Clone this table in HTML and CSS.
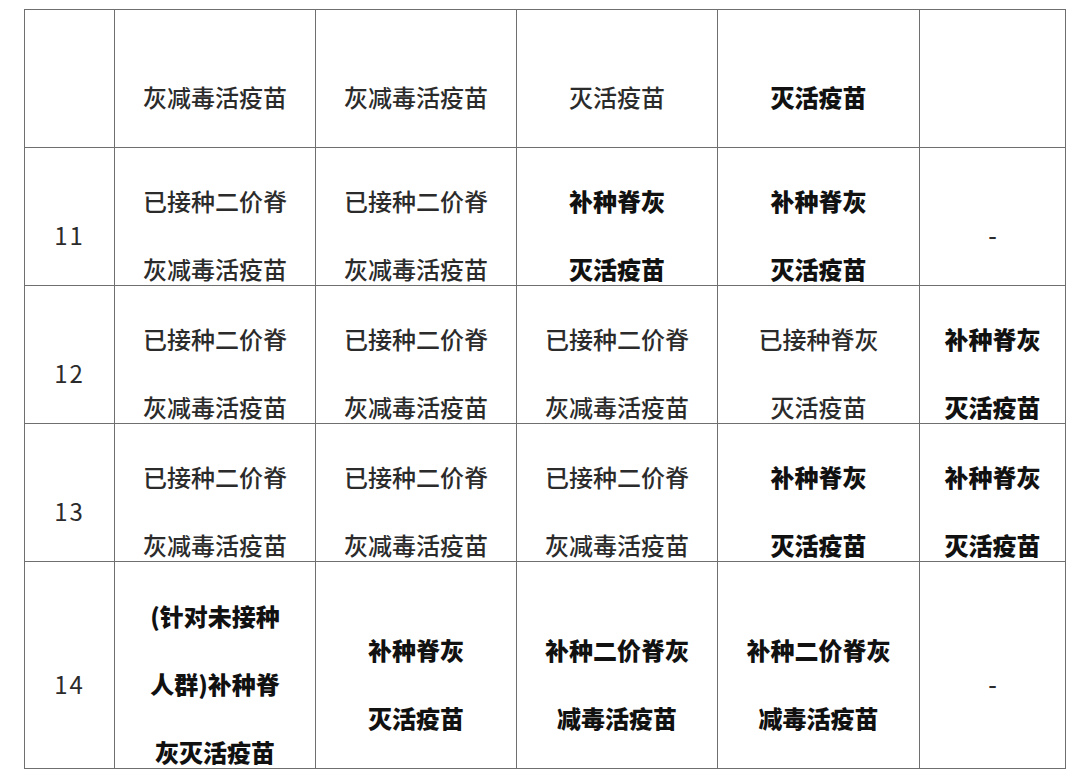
FILE: index.html
```html
<!DOCTYPE html>
<html lang="zh-CN">
<head>
<meta charset="utf-8">
<title>疫苗接种表</title>
<link rel="stylesheet" href="styles.css">
</head>
<body>
<div class="sheet">
  <div class="cell num"></div>
  <div class="cell"><div class="ln">灰减毒活疫苗</div></div>
  <div class="cell"><div class="ln">灰减毒活疫苗</div></div>
  <div class="cell"><div class="ln">灭活疫苗</div></div>
  <div class="cell b"><div class="ln">灭活疫苗</div></div>
  <div class="cell"></div>

  <div class="cell num"><div class="ln">11</div></div>
  <div class="cell"><div class="ln">已接种二价脊</div><div class="ln">灰减毒活疫苗</div></div>
  <div class="cell"><div class="ln">已接种二价脊</div><div class="ln">灰减毒活疫苗</div></div>
  <div class="cell b"><div class="ln">补种脊灰</div><div class="ln">灭活疫苗</div></div>
  <div class="cell b"><div class="ln">补种脊灰</div><div class="ln">灭活疫苗</div></div>
  <div class="cell"><div class="ln dash">-</div></div>

  <div class="cell num"><div class="ln">12</div></div>
  <div class="cell"><div class="ln">已接种二价脊</div><div class="ln">灰减毒活疫苗</div></div>
  <div class="cell"><div class="ln">已接种二价脊</div><div class="ln">灰减毒活疫苗</div></div>
  <div class="cell"><div class="ln">已接种二价脊</div><div class="ln">灰减毒活疫苗</div></div>
  <div class="cell"><div class="ln">已接种脊灰</div><div class="ln">灭活疫苗</div></div>
  <div class="cell b"><div class="ln">补种脊灰</div><div class="ln">灭活疫苗</div></div>

  <div class="cell num"><div class="ln">13</div></div>
  <div class="cell"><div class="ln">已接种二价脊</div><div class="ln">灰减毒活疫苗</div></div>
  <div class="cell"><div class="ln">已接种二价脊</div><div class="ln">灰减毒活疫苗</div></div>
  <div class="cell"><div class="ln">已接种二价脊</div><div class="ln">灰减毒活疫苗</div></div>
  <div class="cell b"><div class="ln">补种脊灰</div><div class="ln">灭活疫苗</div></div>
  <div class="cell b"><div class="ln">补种脊灰</div><div class="ln">灭活疫苗</div></div>

  <div class="cell num"><div class="ln">14</div></div>
  <div class="cell b"><div class="ln">(针对未接种</div><div class="ln">人群)补种脊</div><div class="ln">灰灭活疫苗</div></div>
  <div class="cell b"><div class="ln">补种脊灰</div><div class="ln">灭活疫苗</div></div>
  <div class="cell b"><div class="ln">补种二价脊灰</div><div class="ln">减毒活疫苗</div></div>
  <div class="cell b"><div class="ln">补种二价脊灰</div><div class="ln">减毒活疫苗</div></div>
  <div class="cell"><div class="ln dash">-</div></div>
</div>
</body>
</html>
```
FILE: styles.css
```css
html, body {
  margin: 0;
  padding: 0;
  background: #ffffff;
}

body {
  font-family: "Noto Sans CJK SC", "Noto Sans", sans-serif;
  color: #2b2b2b;
  font-size: 24px;
}

.sheet {
  margin: 9px 0 0 24px;
  width: 1042px;
  display: grid;
  grid-template-columns: 90px 201px 201px 201px 202px 146px;
  grid-template-rows: 138px 138px 138px 138px 207px;
  border-left: 1px solid #6f6f6f;
  border-top: 1px solid #6f6f6f;
  box-sizing: border-box;
}

.cell {
  box-sizing: border-box;
  border-right: 1px solid #6f6f6f;
  border-bottom: 1px solid #6f6f6f;
  padding-top: 37px;
  display: flex;
  flex-direction: column;
  justify-content: center;
  align-items: center;
  min-height: 0;
}

.ln {
  line-height: 68px;
  height: 68px;
  white-space: nowrap;
  flex: none;
  font-weight: 500;
}

.b .ln {
  font-weight: 900;
  color: #111111;
}

.num .ln {
  letter-spacing: 2px;
  font-weight: 400;
  color: #2b2b2b;
}

.dash {
  color: #2b2b2b;
}
```
